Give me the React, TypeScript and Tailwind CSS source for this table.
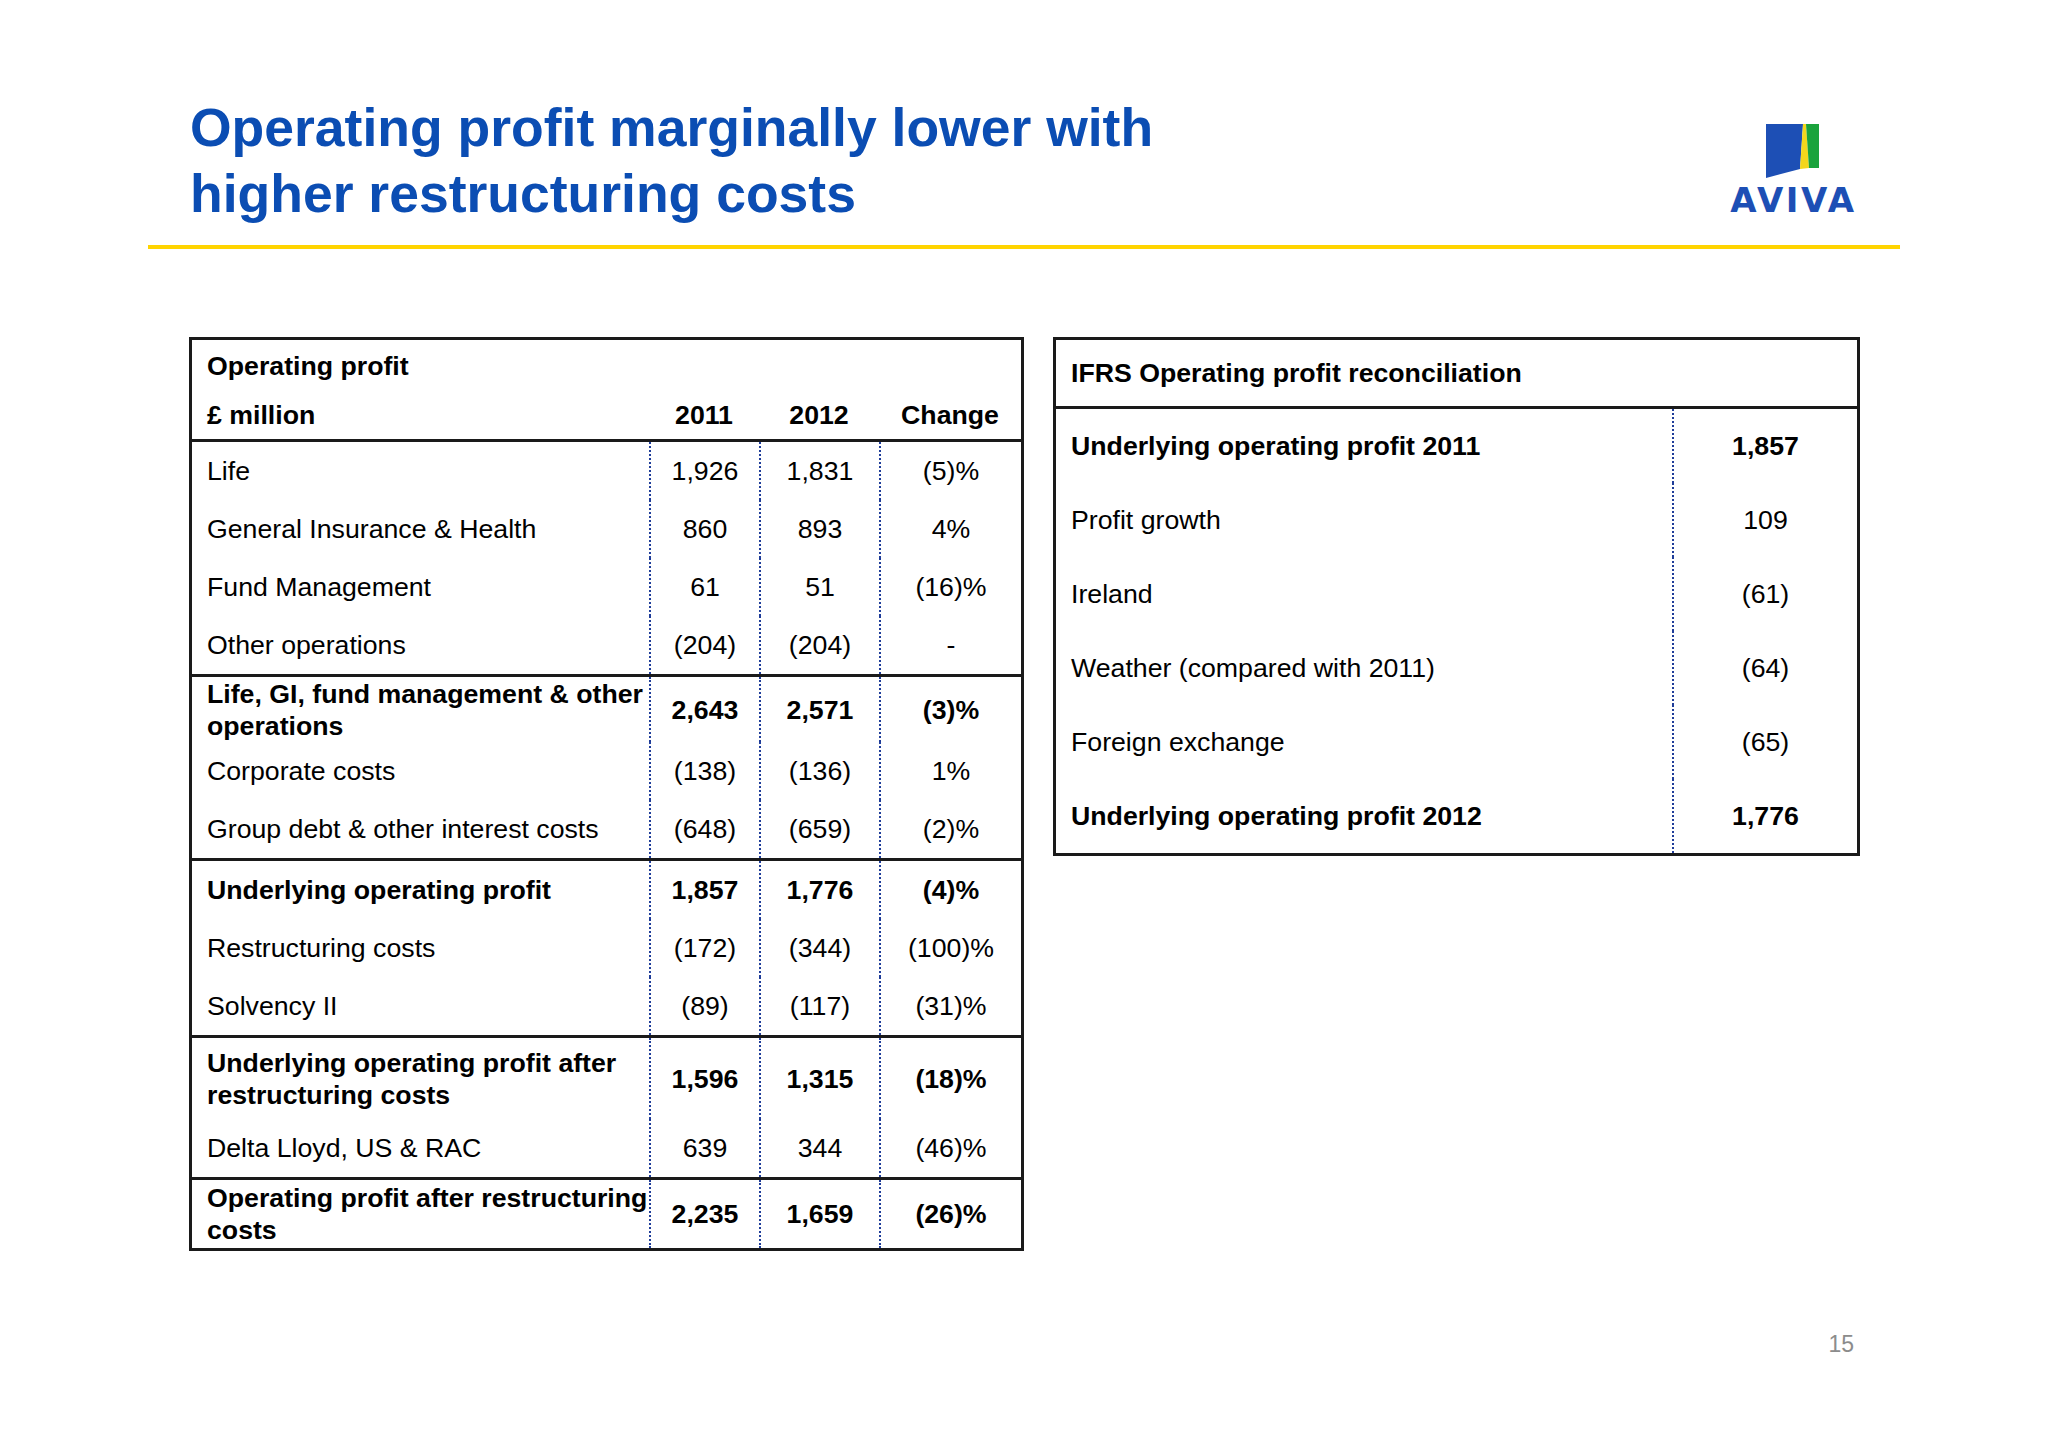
import React from 'react'

type Row = {
  label: string[]
  bold?: boolean
  h: string
  a: string
  b: string
  c: string
}

const groups: Row[][] = [
  [
    { label: ['Life'], h: 'h-[58px]', a: '1,926', b: '1,831', c: '(5)%' },
    { label: ['General Insurance & Health'], h: 'h-[58px]', a: '860', b: '893', c: '4%' },
    { label: ['Fund Management'], h: 'h-[58px]', a: '61', b: '51', c: '(16)%' },
    { label: ['Other operations'], h: 'h-[58px]', a: '(204)', b: '(204)', c: '-' },
  ],
  [
    {
      label: ['Life, GI, fund management & other', 'operations'],
      bold: true,
      h: 'h-[65px]',
      a: '2,643',
      b: '2,571',
      c: '(3)%',
    },
    { label: ['Corporate costs'], h: 'h-[58px]', a: '(138)', b: '(136)', c: '1%' },
    { label: ['Group debt & other interest costs'], h: 'h-[58px]', a: '(648)', b: '(659)', c: '(2)%' },
  ],
  [
    { label: ['Underlying operating profit'], bold: true, h: 'h-[58px]', a: '1,857', b: '1,776', c: '(4)%' },
    { label: ['Restructuring costs'], h: 'h-[58px]', a: '(172)', b: '(344)', c: '(100)%' },
    { label: ['Solvency II'], h: 'h-[58px]', a: '(89)', b: '(117)', c: '(31)%' },
  ],
  [
    {
      label: ['Underlying operating profit after', 'restructuring costs'],
      bold: true,
      h: 'h-[81px]',
      a: '1,596',
      b: '1,315',
      c: '(18)%',
    },
    { label: ['Delta Lloyd, US & RAC'], h: 'h-[58px]', a: '639', b: '344', c: '(46)%' },
  ],
  [
    {
      label: ['Operating profit after restructuring', 'costs'],
      bold: true,
      h: 'h-[68px]',
      a: '2,235',
      b: '1,659',
      c: '(26)%',
    },
  ],
]

const recon = [
  { label: 'Underlying operating profit 2011', value: '1,857', bold: true },
  { label: 'Profit growth', value: '109' },
  { label: 'Ireland', value: '(61)' },
  { label: 'Weather (compared with 2011)', value: '(64)' },
  { label: 'Foreign exchange', value: '(65)' },
  { label: 'Underlying operating profit 2012', value: '1,776', bold: true },
]

const dotted = 'border-l-2 border-dotted border-[#1f3d99]'

function AvivaLogo() {
  return (
    <div className="mt-[28px] flex w-[130px] flex-col items-center">
      <svg width="54" height="55" viewBox="0 0 54 55">
        <polygon points="1,1 38,1 35,46 1,55" fill="#1d4fb5" />
        <polygon points="38,1 41,1 44,45 35,46" fill="#f3d61c" />
        <polygon points="41,1 54,1 54,45 44,45" fill="#1aa33c" />
      </svg>
      <div className="mt-[5px] pl-[3px] font-['DejaVu_Sans'] text-[34px] font-bold leading-[34px] tracking-[2.6px] text-[#1d4fb5]">
        AVIVA
      </div>
    </div>
  )
}

function OperatingTable() {
  return (
    <div className="w-[835px] border-[3px] border-[#1a1a1a]">
      <div className="grid grid-cols-[457px_110px_120px_1fr] font-bold">
        <div className="col-span-4 flex h-[50px] items-end pb-[8px] pl-[15px]">Operating profit</div>
        <div className="flex h-[49px] items-center pl-[15px]">£ million</div>
        <div className="flex h-[49px] items-center justify-center">2011</div>
        <div className="flex h-[49px] items-center justify-center">2012</div>
        <div className="flex h-[49px] items-center justify-center">Change</div>
      </div>
      {groups.map((rows, gi) => (
        <div key={gi} className="border-t-[3px] border-[#1a1a1a]">
          {rows.map((r) => (
            <div
              key={r.label.join(' ')}
              className={`grid grid-cols-[457px_110px_120px_1fr] ${r.h} ${r.bold ? 'font-bold' : ''}`}
            >
              <div className="flex flex-col justify-center whitespace-nowrap pl-[15px]">
                {r.label.map((l) => (
                  <span key={l}>{l}</span>
                ))}
              </div>
              <div className={`flex items-center justify-center ${dotted}`}>{r.a}</div>
              <div className={`flex items-center justify-center ${dotted}`}>{r.b}</div>
              <div className={`flex items-center justify-center ${dotted}`}>{r.c}</div>
            </div>
          ))}
        </div>
      ))}
    </div>
  )
}

function ReconciliationTable() {
  return (
    <div className="w-[807px] border-[3px] border-[#1a1a1a]">
      <div className="flex h-[66px] items-center pl-[15px] font-bold">IFRS Operating profit reconciliation</div>
      <div className="border-t-[3px] border-[#1a1a1a]">
        {recon.map((r) => (
          <div key={r.label} className={`grid h-[74px] grid-cols-[616px_1fr] ${r.bold ? 'font-bold' : ''}`}>
            <div className="flex items-center pl-[15px]">{r.label}</div>
            <div className={`flex items-center justify-center ${dotted}`}>{r.value}</div>
          </div>
        ))}
      </div>
    </div>
  )
}

export default function App() {
  return (
    <div className="h-[1447px] w-[2048px] bg-white font-['Liberation_Sans',Arial,sans-serif] text-black">
      {/* Header */}
      <div className="flex h-[227px] items-start justify-between pl-[190px] pr-[191px] pt-[95px]">
        <h1 className="text-[53.5px] font-bold leading-[66px] text-[#0b4db3]">
          Operating profit marginally lower with
          <br />
          higher restructuring costs
        </h1>
        <AvivaLogo />
      </div>
      <div className="ml-[148px] mt-[18px] h-[4px] w-[1752px] bg-[#ffd400]" />

      {/* Tables */}
      <div className="mt-[88px] flex items-start gap-[29px] pl-[189px] text-[26.7px] leading-[32px]">
        <OperatingTable />
        <ReconciliationTable />
      </div>

      <div className="mt-[76px] flex justify-end pr-[194px] text-[23px] text-[#8c8c8c]">15</div>
    </div>
  )
}
